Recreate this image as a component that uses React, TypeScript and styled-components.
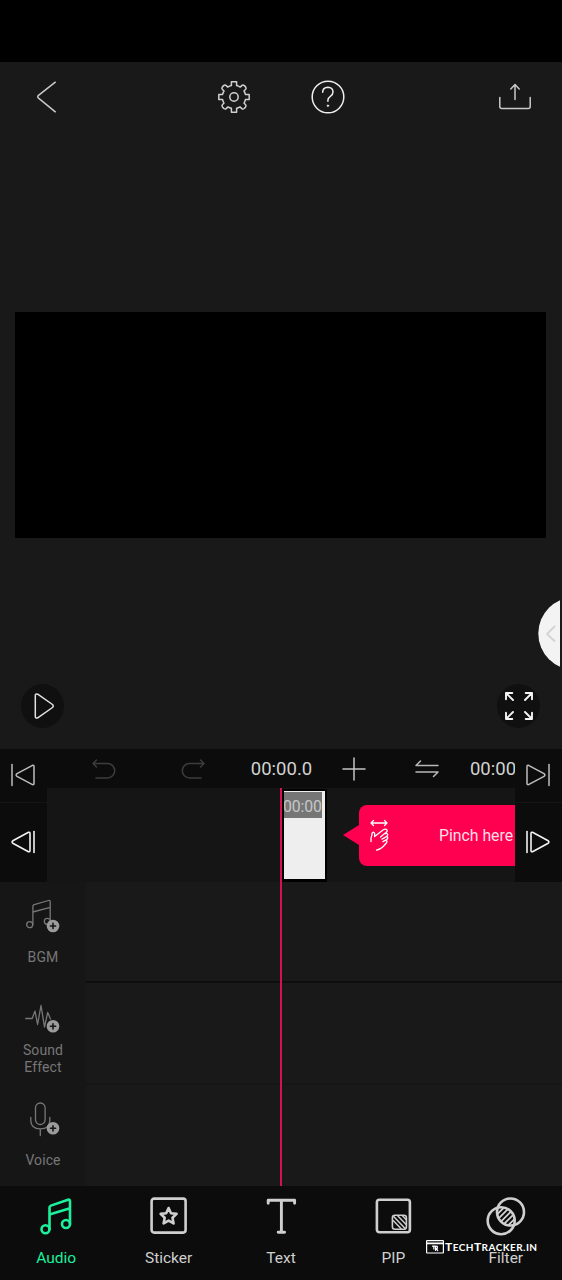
import React from "react";
import styled, { createGlobalStyle } from "styled-components";

const GlobalStyle = createGlobalStyle`
  *, *::before, *::after { box-sizing: border-box; }
  body { margin: 0; background: #191919; font-family: Roboto, "Liberation Sans", sans-serif; }
  svg { display: block; overflow: visible; }
`;

const Screen = styled.div`
  position: relative;
  width: 562px;
  height: 1280px;
  display: flex;
  flex-direction: column;
  background: #191919;
  overflow: hidden;
`;

const StatusBar = styled.div`
  height: 62px;
  flex: none;
  background: #000;
`;

const Preview = styled.section`
  height: 687px;
  flex: none;
  display: flex;
  flex-direction: column;
`;

const TopBar = styled.header`
  display: grid;
  grid-template-columns: repeat(6, 1fr);
  height: 70px;
`;

const TopButton = styled.button<{ $column: number }>`
  grid-column: ${(p) => p.$column};
  display: flex;
  align-items: center;
  justify-content: center;
  padding: 0;
  border: 0;
  background: none;
`;

const VideoCanvas = styled.div`
  height: 226px;
  margin: 180px 16px 0 15px;
  background: #000;
`;

const PlaybackBar = styled.div`
  display: flex;
  justify-content: space-between;
  margin-top: auto;
  padding: 0 22px 21px 21px;
`;

const RoundButton = styled.button`
  width: 43px;
  height: 44px;
  display: flex;
  align-items: center;
  justify-content: center;
  padding: 0;
  border: 0;
  border-radius: 50%;
  background: #101010;
`;

const EdgeHandle = styled.div`
  position: absolute;
  top: 597px;
  right: 2px;
  width: 22px;
  height: 73px;
  overflow: hidden;
`;

const Timeline = styled.section`
  position: relative;
  flex: none;
  height: 437px;
  display: flex;
  flex-direction: column;
`;

const TimelineHead = styled.div`
  display: grid;
  grid-template-columns: 47px 1fr 47px;
  height: 133px;
  background: #0c0c0c;
`;

const SkipColumn = styled.div`
  display: grid;
  grid-template-rows: 53px 80px;
`;

const SkipButton = styled.button`
  display: flex;
  align-items: center;
  justify-content: center;
  padding: 0 0.5px 1.5px 0;
  border: 0;
  background: none;
  & + & { border-top: 1px solid #151515; }
`;

const HeadCenter = styled.div`
  display: flex;
  flex-direction: column;
  min-width: 0;
  overflow: hidden;
`;

const Toolbar = styled.div`
  display: grid;
  grid-template-columns: 114px 64px 112px 33px 100px 45px;
  align-items: center;
  justify-items: center;
  height: 39px;
  padding-top: 1px;
`;

const SwapSlot = styled.div`
  justify-self: end;
  margin-right: 31px;
`;

const Timecode = styled.span`
  padding: 0 0 0 1px;
  font-size: 18.5px;
  line-height: 22px;
  color: #d2d2d2;
  white-space: nowrap;
`;

const ClipRow = styled.div`
  flex: 1;
  display: flex;
  padding-left: 235px;
  background: #151515;
`;

const Clip = styled.div`
  flex: none;
  width: 45px;
  height: 93px;
  margin-top: 1px;
  border: solid #000;
  border-width: 2px 2px 3px 2px;
  background: #eee;
  overflow: hidden;
`;

const ClipLabel = styled.div`
  width: 38px;
  height: 26px;
  margin-top: 1px;
  background: #767676;
  color: #c6c6c6;
  font-size: 15.8px;
  line-height: 29px;
  letter-spacing: -0.1px;
  text-indent: -1px;
`;

const Hint = styled.div`
  flex: none;
  display: flex;
  align-items: center;
  margin: 17px 0 0 15.500px;
  height: 60px;
`;

const HintArrow = styled.div`
  border: solid transparent;
  border-width: 10px 16px 10px 0;
  border-right-color: #ff0050;
`;

const HintBubble = styled.div`
  display: flex;
  align-items: center;
  width: 240px;
  height: 61px;
  padding-left: 10px;
  border-radius: 8px;
  background: #ff0050;
  color: #ffdfe8;
  font-size: 15.8px;
  white-space: nowrap;
`;

const HintText = styled.span`
  margin: 1px 0 0 50.500px;
`;

const Track = styled.div`
  flex: 1;
  display: grid;
  grid-template-columns: 86px 1fr;
`;

const TrackLabel = styled.div`
  display: flex;
  flex-direction: column;
  align-items: center;
  padding-top: 17px;
  background: #161616;
  color: #777;
`;

const TrackName = styled.div`
  display: flex;
  align-items: center;
  height: 33px;
  width: 56px;
  margin-top: 8px;
  justify-content: center;
  text-align: center;
  font-size: 14px;
  line-height: 16.5px;
  letter-spacing: 0.1px;
`;

const TrackLane = styled.div<{ $divider?: string }>`
  background: #191919;
  border-bottom: 2px solid ${(p) => p.$divider || "#191919"};
`;

const Playhead = styled.div`
  position: absolute;
  top: 39px;
  bottom: 0;
  left: 280px;
  width: 2px;
  background: #d4124f;
`;

const TabBar = styled.nav`
  flex: 1;
  position: relative;
  display: grid;
  grid-template-columns: repeat(5, 1fr);
  background: #0c0c0c;
`;

const Tab = styled.button<{ $active?: boolean }>`
  display: flex;
  flex-direction: column;
  align-items: center;
  padding: 12px 0 0;
  border: 0;
  background: none;
  color: ${(p) => (p.$active ? "#1df09c" : "#cfcfcf")};
  font: 15.5px/18px Roboto, "Liberation Sans", sans-serif;
`;

const TabName = styled.span`
  margin-top: 15px;
`;

const Watermark = styled.div`
  position: absolute;
  left: 426px;
  top: 53px;
  display: flex;
  align-items: center;
  gap: 1px;
  color: #fff;
`;

const WatermarkText = styled.span`
  font: 700 10px/16px Lato, sans-serif;
  letter-spacing: 0.45px;
  text-transform: uppercase;
  white-space: nowrap;
`;

const LargeCap = styled.span`
  font-size: 12px;
`;

type IconProps = {
  w: number;
  h: number;
  color?: string;
  stroke?: number;
  children: React.ReactNode;
};

const Icon = ({ w, h, color = "currentColor", stroke = 1.5, children }: IconProps) => (
  <svg
    width={w}
    height={h}
    viewBox={`0 0 ${w} ${h}`}
    fill="none"
    stroke={color}
    strokeWidth={stroke}
    strokeLinecap="round"
    strokeLinejoin="round"
  >
    {children}
  </svg>
);

const PlusBadge = ({ x, y }: { x: number; y: number }) => (
  <g stroke="none">
    <circle cx={x} cy={y} r="6.3" fill="#9b9b9b" />
    <path d={`M${x - 2.6} ${y}h5.2M${x} ${y - 2.6}v5.2`} stroke="#161616" strokeWidth="1.6" />
  </g>
);

const SkipBack = () => (
  <Icon w={24} h={22} color="#bdbdbd">
    <path d="M1 .5v21" />
    <path d="M21.5 1.3 6 9.6q-1.8 1.4 0 2.8l15.5 8.2q1.5.3 1.5-1.2V2.500q0-1.500-1.500-1.200Z" />
  </Icon>
);

const StepBack = () => (
  <Icon w={24} h={22} color="#f2f2f2" stroke={1.6}>
    <path d="M23 .5v21" />
    <path d="M17.5 1.3 1.800 9.800q-1.400 1.200 0 2.400l15.700 8.500q1.500.3 1.500-1.200v-17q0-1.500-1.500-1.200Z" />
  </Icon>
);

const Flip = styled.div`
  transform: scaleX(-1);
`;

const tracks = [
  {
    name: "BGM",
    divider: "#0e0e0e",
    icon: (
      <>
        <circle cx="3.7" cy="25.700" r="3" />
        <circle cx="21.300" cy="22.300" r="3" />
        <path d="M6.900 25.700V7.300q0-1.300 1.300-1.700L22.500 1.500q1.700-.5 1.700 1.200V22.300M6.900 13 24.200 8.400" />
        <PlusBadge x={27} y={27} />
      </>
    ),
  },
  {
    name: "Sound Effect",
    divider: "#161616",
    icon: (
      <>
        <path d="M-.3 18.500h6.500l2.800-7.500 2.600 13.500L15 5.500l3.500 21.500 3.200-14.500L24.500 19" />
        <PlusBadge x={27} y={26.3} />
      </>
    ),
  },
  {
    name: "Voice",
    icon: (
      <>
        <rect x="9.5" y="1" width="9.600" height="21.500" rx="4.800" />
        <path d="M4.800 15.500v3q0 8.300 9.500 8.300t9.500-8.300v-3M14.300 27v6.500" />
        <PlusBadge x={27} y={26.3} />
      </>
    ),
  },
];

const tabs = [
  {
    name: "Audio",
    icon: (
      <>
        <circle cx="7.500" cy="31.200" r="4" />
        <circle cx="28" cy="26" r="4" />
        <path d="M11.500 31.200V9.600q0-1.500 1.400-2L30 1.800q2-.6 2 1.500V26M11.500 16.600 32 10.300" />
      </>
    ),
  },
  {
    name: "Sticker",
    icon: (
      <g transform="translate(-.6 -.6)">
        <rect x="1.200" y="1.200" width="34" height="34" rx="2.500" />
        <path d="m18.200 10.600 2.400 5.200 5.600.7-4.100 3.900 1.100 5.600-5-2.800-5 2.800 1.100-5.600-4.100-3.900 5.600-.7Z" />
      </g>
    ),
  },
  {
    name: "Text",
    icon: <path d="M5.200 5.200V2.300h26.400v2.900M18.400 2.300v31.500M15.200 34.200h6.400" strokeWidth="2.900" />,
  },
  {
    name: "PIP",
    icon: (
      <g transform="translate(.4)">
        <rect x="1.500" y="1.700" width="33" height="32.500" rx="2.500" />
        <rect x="17" y="17.200" width="14" height="14" rx="2.500" strokeWidth="1.600" />
        <path d="m18 22.700 7.500 7.800M18 18.200l12 12.500M22.500 17.900l8 8.300M27 17.700l3.600 3.700" strokeWidth="1.500" />
      </g>
    ),
  },
  {
    name: "Filter",
    icon: (
      <>
        <clipPath id="lens-upper"><circle cx="22.500" cy="14" r="13.500" /></clipPath>
        <clipPath id="lens-lower"><circle cx="13.200" cy="22.700" r="13.500" /></clipPath>
        <circle cx="22.500" cy="14" r="13.500" />
        <circle cx="13.200" cy="22.700" r="13.500" />
        <g clipPath="url(#lens-upper)">
          <path
            clipPath="url(#lens-lower)"
            d="M3 22.500 25.500 0M3 28 30 1M5 31.500 33 3.500M8 34 35 7M14 33.500 37 10.500"
            strokeWidth="1.900"
          />
        </g>
      </>
    ),
  },
];

export default function App() {
  return (
    <Screen>
      <GlobalStyle />
      <StatusBar />
      <Preview>
        <TopBar>
          <TopButton $column={1} aria-label="Back">
            <Icon w={19} h={32} color="#c9c9c9">
              <path d="M18.300 1.200 1.500 14.400q-1.600 1.400 0 2.800l16.800 13.600" />
            </Icon>
          </TopButton>
          <TopButton $column={3} aria-label="Settings">
            <Icon w={32} h={32} color="#d0d0d0">
              <circle cx="16" cy="16" r="4.200" />
              <path d="M13.400.8h5.200v3.800q2 .5 3.600 1.500l1.800-1.700q1.200-.8 2.300.2l1.300 1.300q1 1.200.1 2.300l-1.700 1.800q1 1.600 1.400 3.400h3.800v5.200h-3.800q-.4 1.900-1.400 3.500l1.600 1.700q.9 1.100-.1 2.300l-1.400 1.400q-1.100.9-2.300.1L22 25.900q-1.600 1-3.400 1.400v3.900h-5.200v-3.900q-1.800-.4-3.400-1.400l-1.800 1.700q-1.200.8-2.300-.1l-1.400-1.400q-1-1.200-.1-2.300L6 22.100q-1-1.600-1.400-3.500H.8v-5.200h3.800Q5 11.600 6 10L4.300 8.200q-.9-1.100.1-2.300l1.300-1.300Q6.800 3.600 8 4.400l1.800 1.700q1.600-1 3.600-1.500Z" />
            </Icon>
          </TopButton>
          <TopButton $column={4} aria-label="Help">
            <Icon w={34} h={34} color="#eee">
              <circle cx="17" cy="17" r="15.800" />
              <path d="M11.700 12.300q0-5 5.200-5.100 5 .1 5.100 4.800 0 2.600-2.600 4.300-2.500 1.600-2.500 4v1" />
              <circle cx="16.900" cy="25.700" r=".8" fill="#eee" strokeWidth=".8" />
            </Icon>
          </TopButton>
          <TopButton $column={6} aria-label="Export">
            <Icon w={32} h={32} color="#c9c9c9">
              <path d="M.8 16.500v9q0 2 2 2h26.400q2 0 2-2v-9M16 18.500V4M11.800 8 16 3.600 20.200 8" />
            </Icon>
          </TopButton>
        </TopBar>
        <VideoCanvas />
        <PlaybackBar>
          <RoundButton aria-label="Play">
            <Icon w={20} h={26} color="#e2e2e2">
              <path d="M4.700 1.200 19.500 11.500q1.500 1.500 0 3L4.700 24.800q-2.400 1-2.400-1.500V2.700q0-2.500 2.400-1.500Z" />
            </Icon>
          </RoundButton>
          <RoundButton aria-label="Full screen">
            <Icon w={28} h={28} color="#f4f4f4" stroke={1.9}>
              <path d="M1 7.300V1h6.300M1 1l7 7M20.700 1H27v6.300M27 1l-7 7M1 20.700V27h6.300M1 27l7-7M20.700 27H27v-6.300M27 27l-7-7" />
            </Icon>
          </RoundButton>
        </PlaybackBar>
      </Preview>

      <Timeline>
        <TimelineHead>
          <SkipColumn>
            <SkipButton aria-label="Go to start"><SkipBack /></SkipButton>
            <SkipButton aria-label="Previous frame"><StepBack /></SkipButton>
          </SkipColumn>
          <HeadCenter>
            <Toolbar>
              <Icon w={24} h={20} color="#3c3c3c">
                <path d="M1 4.500h14.500a7.200 7.200 0 0 1 0 14.400H4M4.500 1 1 4.500 4.500 8" />
              </Icon>
              <Icon w={24} h={20} color="#3c3c3c">
                <path d="M23 4.500H8.500a7.200 7.200 0 0 0 0 14.400H20M19.500 1 23 4.500 19.500 8" />
              </Icon>
              <Timecode>00:00.0</Timecode>
              <Icon w={22} h={22} color="#c4c4c4">
                <path d="M0 11h22M11 0v22" />
              </Icon>
              <SwapSlot>
                <Icon w={24} h={18} color="#b8b8b8">
                  <path d="M23 5.500H1L5.500 1M1 12h22l-4.500 4.500" />
                </Icon>
              </SwapSlot>
              <Timecode>00:00</Timecode>
            </Toolbar>
            <ClipRow>
              <Clip>
                <ClipLabel>00:00</ClipLabel>
              </Clip>
              <Hint>
                <HintArrow />
                <HintBubble>
                  <Icon w={20} h={32} color="#fff" stroke={1.3}>
                    <path d="M2 4h16M4.500 1.500 2 4l2.500 2.500M15.500 1.500 18 4l-2.500 2.500" />
                    <path d="M2 22.500q-.5-3.500.8-6 0-3 1.500-3.300 1.800 0 1.300 4.300l8.400-6.500q2.800-1.700 4 0 .8 1.600-1.700 3L11.500 18M16.500 14.500q2.200-.3 2.200 1.500 0 1.200-5.700 4.200M18 17.800q1.200.6.500 1.900-.6 1-4.500 3M17.500 21.500q1 .8 0 2.300l-3.500 4q-3 2.700-6.500 3.400" />
                  </Icon>
                  <HintText>Pinch here</HintText>
                </HintBubble>
              </Hint>
            </ClipRow>
          </HeadCenter>
          <SkipColumn>
            <SkipButton aria-label="Go to end"><Flip><SkipBack /></Flip></SkipButton>
            <SkipButton aria-label="Next frame"><Flip><StepBack /></Flip></SkipButton>
          </SkipColumn>
        </TimelineHead>
        {tracks.map((t) => (
          <Track key={t.name}>
            <TrackLabel>
              <Icon w={34} h={34} stroke={1.3} color="#777">{t.icon}</Icon>
              <TrackName>{t.name}</TrackName>
            </TrackLabel>
            <TrackLane $divider={t.divider} />
          </Track>
        ))}
        <Playhead />
      </Timeline>

      <TabBar>
        {tabs.map((t, i) => (
          <Tab key={t.name} $active={i === 0}>
            <Icon w={36} h={36} stroke={2.6}>{t.icon}</Icon>
            <TabName>{t.name}</TabName>
          </Tab>
        ))}
        <Watermark>
          <Icon w={18} h={14} stroke={1.2}>
            <rect x=".6" y=".6" width="16.800" height="12.400" rx=".5" />
            <path d="M1 3.400h16" strokeWidth="1.600" />
            <path d="M6.500 6.200h3v4.300M7.800 6.500v2.500M9.500 6.300h1.800v2l-1.300.2 1.700 2" />
          </Icon>
          <WatermarkText>
            <LargeCap>T</LargeCap>ech<LargeCap>T</LargeCap>racker.in
          </WatermarkText>
        </Watermark>
      </TabBar>

      <EdgeHandle>
        <Icon w={22} h={73} color="#d4d4d4" stroke={2}>
          <circle cx="36.800" cy="36.500" r="36.500" fill="#f3f3f3" stroke="none" />
          <path d="m16.500 29.500-7.500 7.500 7.500 7" />
        </Icon>
      </EdgeHandle>
    </Screen>
  );
}
